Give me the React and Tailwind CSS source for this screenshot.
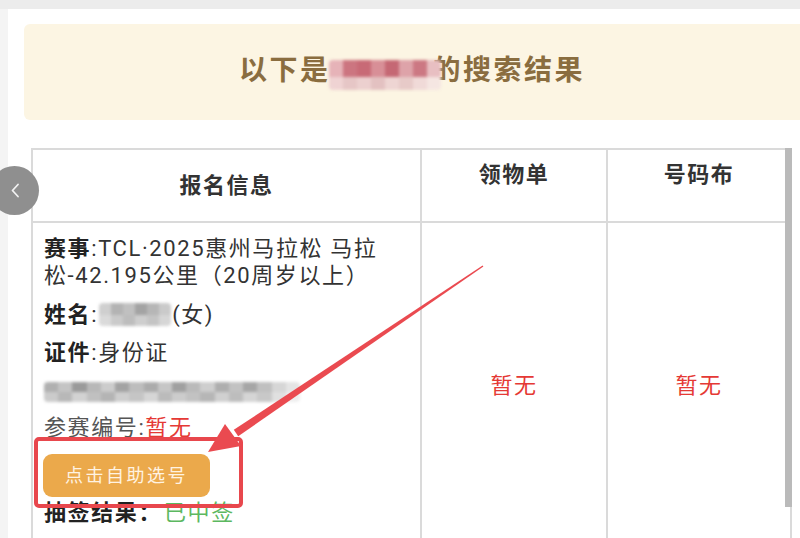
import React from "react";

const titleRows = [
  { h: 17, cells: ["#e6b3b8", "#cc7580", "#c86a76", "#d88f97", "#c56874", "#dea3a9", "#cc7883", "#e8bfc2"] },
  { h: 13, cells: ["#efd3d3", "#e6c6c6", "#ecd0cf", "#e3c1c1", "#eed5d3", "#e7cac8", "#f0dad8", "#f5e6e2"] },
];

const nameRows = [
  { h: 12, cells: ["#cfcfcf", "#b3b3b3", "#c0c0c0", "#a3a3a3", "#b6b6b6", "#cacaca"] },
  { h: 11, cells: ["#dadada", "#cacaca", "#bdbdbd", "#cecece", "#c4c4c4", "#d6d6d6"] },
];

const idRows = [
  { h: 10, cells: ["#b0b0b0", "#c4c4c4", "#9a9a9a", "#b8b8b8", "#cccccc", "#a3a3a3", "#bdbdbd", "#ababab", "#c6c6c6", "#a0a0a0", "#bababa", "#cecece", "#aeaeae", "#c2c2c2", "#a6a6a6", "#c0c0c0", "#d6d6d6", "#e4e4e4"] },
  { h: 10, cells: ["#cbcbcb", "#b8b8b8", "#d2d2d2", "#c0c0c0", "#b4b4b4", "#cecece", "#c5c5c5", "#d6d6d6", "#bbbbbb", "#cccccc", "#c2c2c2", "#b6b6b6", "#d0d0d0", "#bdbdbd", "#d5d5d5", "#c8c8c8", "#e0e0e0", "#eeeeee"] },
];

function Mosaic({ rows, width, className = "" }) {
  return (
    <span className={"inline-flex flex-col overflow-hidden rounded-[4px] blur-[1.5px] align-middle " + className} style={{ width }}>
      {rows.map((row, i) => (
        <span key={i} className="flex" style={{ height: row.h }}>
          {row.cells.map((c, j) => (
            <span key={j} className="flex-1" style={{ background: c }} />
          ))}
        </span>
      ))}
    </span>
  );
}

export default function App() {
  return (
    <div className="relative w-[800px] h-[538px] overflow-hidden bg-white font-['Roboto','Noto_Sans_CJK_SC',sans-serif]">
      <div className="h-[9px] bg-[#ececec]" />
      <div className="flex h-[529px]">
        <div className="w-[8px] bg-[#f4f4f4]" />
        <div className="flex-1 pl-[16px] pt-[15px]">
          {/* banner */}
          <div className="h-[96px] rounded-l-[6px] bg-[#fcf5e3] flex items-center justify-center">
            <h1 className="text-[28px] leading-[34px] font-bold tracking-[2.5px] text-[#8a6d3f] whitespace-nowrap">
              以下是
              <Mosaic rows={titleRows} width={112} className="-mr-[8px] -ml-[2px] mt-[4px]" />
              的搜索结果
            </h1>
          </div>

          {/* table */}
          <div className="mt-[28px] ml-[7px] w-[761px] grid grid-cols-[389px_186px_184px] border-l-2 border-t-2 border-[#dadada]">
            <div className="h-[73px] border-r-2 border-b-2 border-[#dadada] flex items-center justify-center">
              <span className="text-[22px] leading-[30px] font-bold tracking-[1.5px] text-[#333]">报名信息</span>
            </div>
            <div className="h-[73px] border-r-2 border-b-2 border-[#dadada] flex justify-center pt-[10px]">
              <span className="text-[22px] leading-[30px] font-bold tracking-[1.5px] text-[#333]">领物单</span>
            </div>
            <div className="h-[73px] border-r-2 border-b-2 border-[#dadada] flex justify-center pt-[10px]">
              <span className="text-[22px] leading-[30px] font-bold tracking-[1.5px] text-[#333]">号码布</span>
            </div>

            {/* body */}
            <div className="h-[324px] border-r-2 border-b-2 border-[#dadada] pl-[11px] pt-[12px] text-[22px] tracking-[1.6px] text-[#333] whitespace-nowrap">
              <div className="leading-[27px]">
                <span className="font-bold text-[#222]">赛事</span>:TCL·2025惠州马拉松 马拉
                <br />
                松-42.195公里（20周岁以上）
              </div>
              <div className="mt-[12px] leading-[27px] flex items-center">
                <span className="font-bold text-[#222]">姓名</span>:
                <Mosaic rows={nameRows} width={72} className="mx-[1px]" />
                (女)
              </div>
              <div className="mt-[11px] leading-[27px]">
                <span className="font-bold text-[#222]">证件</span>:身份证
              </div>
              <div className="mt-[12px] h-[27px] flex items-center">
                <Mosaic rows={idRows} width={256} />
              </div>
              <div className="mt-[9px] leading-[27px] text-[#555]">
                参赛编号:<span className="text-[#e53935]">暂无</span>
              </div>
              <button className="mt-[13px] -ml-[1px] w-[167px] h-[43px] rounded-[9px] bg-[#eba94b] text-[18px] tracking-[2.5px] text-[#fff3e2] flex items-center justify-center">
                点击自助选号
              </button>
              <div className="mt-[2px] leading-[27px]">
                <span className="font-bold text-[#222]">抽签结果：</span>
                <span className="ml-[2px] text-[#5cb860]">已中签</span>
              </div>
            </div>
            <div className="h-[324px] border-r-2 border-b-2 border-[#dadada] flex items-center justify-center pt-[3px]">
              <span className="text-[22px] tracking-[1.5px] text-[#e53935]">暂无</span>
            </div>
            <div className="h-[324px] border-r-2 border-b-2 border-[#dadada] flex items-center justify-center pt-[3px]">
              <span className="text-[22px] tracking-[1.5px] text-[#e53935]">暂无</span>
            </div>
          </div>
        </div>
      </div>

      {/* scrollbar */}
      <div className="absolute left-[785px] top-[148px] w-[7px] h-[359px] bg-[#bababa]" />

      {/* back button */}
      <div className="absolute left-[-10px] top-[166px] w-[49px] h-[49px] rounded-full bg-[#8f8f8f] flex items-center justify-center">
        <svg width="10" height="15" viewBox="0 0 10 15" fill="none">
          <path d="M8 1.5 L2.5 7.5 L8 13.5" stroke="#f2f2f2" strokeWidth="1.8" strokeLinecap="round" strokeLinejoin="round" />
        </svg>
      </div>

      {/* annotation */}
      <svg className="absolute left-0 top-0 pointer-events-none" width="800" height="538">
        <rect x="36" y="439" width="205" height="67" rx="3" fill="none" stroke="#e8474d" strokeWidth="4" />
        <polygon points="482.6,265.4 483.4,266.6 238.2,436.2 233.8,429.8" fill="#ea4a50" />
        <polygon points="208,452 225,424 241,446" fill="#ea4a50" />
      </svg>
    </div>
  );
}
